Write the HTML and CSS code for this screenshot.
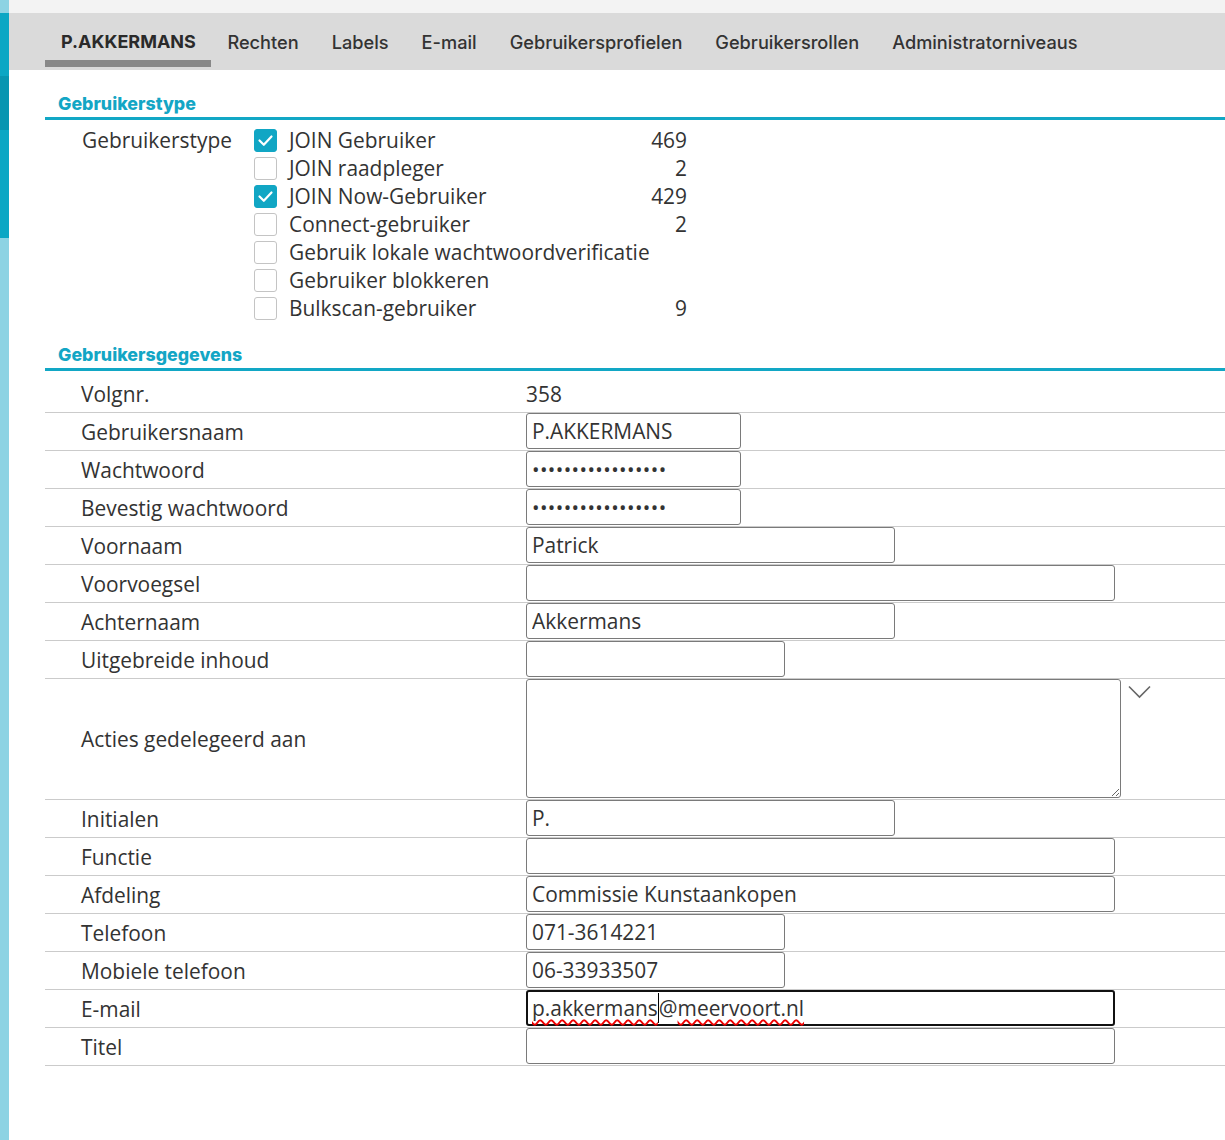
FILE: index.html
```html
<!DOCTYPE html>
<html lang="nl">
<head>
<meta charset="utf-8">
<title>Gebruiker P.AKKERMANS</title>
<link rel="stylesheet" href="styles.css">
</head>
<body>
<div class="rail">
  <div class="rail-a"></div>
  <div class="rail-b"></div>
  <div class="rail-c"></div>
  <div class="rail-b rail-d"></div>
  <div class="rail-a rail-rest"></div>
</div>
<div class="main">
  <div class="topbar"></div>
  <nav class="tabs">
    <div class="tab active">P.AKKERMANS</div>
    <div class="tab">Rechten</div>
    <div class="tab">Labels</div>
    <div class="tab">E-mail</div>
    <div class="tab">Gebruikersprofielen</div>
    <div class="tab">Gebruikersrollen</div>
    <div class="tab">Administratorniveaus</div>
  </nav>

  <div class="content">
    <h2 class="section">Gebruikerstype</h2>
    <div class="types">
      <div class="types-label">Gebruikerstype</div>
      <div class="types-list">
        <div class="opt"><span class="cb on"><svg viewBox="0 0 23 23" width="23" height="23"><path d="M5.5 11.5 L9.8 15.8 L17.5 7.5" fill="none" stroke="#fff" stroke-width="2.2" stroke-linecap="round" stroke-linejoin="round"/></svg></span><span class="opt-text">JOIN Gebruiker</span><span class="num">469</span></div>
        <div class="opt"><span class="cb"></span><span class="opt-text">JOIN raadpleger</span><span class="num">2</span></div>
        <div class="opt"><span class="cb on"><svg viewBox="0 0 23 23" width="23" height="23"><path d="M5.5 11.5 L9.8 15.8 L17.5 7.5" fill="none" stroke="#fff" stroke-width="2.2" stroke-linecap="round" stroke-linejoin="round"/></svg></span><span class="opt-text">JOIN Now-Gebruiker</span><span class="num">429</span></div>
        <div class="opt"><span class="cb"></span><span class="opt-text">Connect-gebruiker</span><span class="num">2</span></div>
        <div class="opt"><span class="cb"></span><span class="opt-text">Gebruik lokale wachtwoordverificatie</span><span class="num"></span></div>
        <div class="opt"><span class="cb"></span><span class="opt-text">Gebruiker blokkeren</span><span class="num"></span></div>
        <div class="opt"><span class="cb"></span><span class="opt-text">Bulkscan-gebruiker</span><span class="num">9</span></div>
      </div>
    </div>

    <h2 class="section section-2">Gebruikersgegevens</h2>
    <div class="table">
      <div class="row first"><div class="lbl">Volgnr.</div><div class="val plain">358</div></div>
      <div class="row"><div class="lbl">Gebruikersnaam</div><div class="val"><input class="inp w215" type="text" value="P.AKKERMANS"></div></div>
      <div class="row"><div class="lbl">Wachtwoord</div><div class="val"><input class="inp w215" type="password" value="abcdefghijklmnopq"></div></div>
      <div class="row"><div class="lbl">Bevestig wachtwoord</div><div class="val"><input class="inp w215" type="password" value="abcdefghijklmnopq"></div></div>
      <div class="row"><div class="lbl">Voornaam</div><div class="val"><input class="inp w369" type="text" value="Patrick"></div></div>
      <div class="row"><div class="lbl">Voorvoegsel</div><div class="val"><input class="inp w589" type="text" value=""></div></div>
      <div class="row"><div class="lbl">Achternaam</div><div class="val"><input class="inp w369" type="text" value="Akkermans"></div></div>
      <div class="row"><div class="lbl">Uitgebreide inhoud</div><div class="val"><input class="inp w259" type="text" value=""></div></div>
      <div class="row tall"><div class="lbl">Acties gedelegeerd aan</div><div class="val val-flex"><textarea class="area"></textarea><svg class="chev" viewBox="0 0 24 14" width="24" height="14"><polyline points="1,1.5 11.5,12 22,1.5" fill="none" stroke="#666" stroke-width="1.6"/></svg></div></div>
      <div class="row"><div class="lbl">Initialen</div><div class="val"><input class="inp w369" type="text" value="P."></div></div>
      <div class="row"><div class="lbl">Functie</div><div class="val"><input class="inp w589" type="text" value=""></div></div>
      <div class="row"><div class="lbl">Afdeling</div><div class="val"><input class="inp w589" type="text" value="Commissie Kunstaankopen"></div></div>
      <div class="row"><div class="lbl">Telefoon</div><div class="val"><input class="inp w259" type="text" value="071-3614221"></div></div>
      <div class="row"><div class="lbl">Mobiele telefoon</div><div class="val"><input class="inp w259" type="text" value="06-33933507"></div></div>
      <div class="row"><div class="lbl">E-mail</div><div class="val"><div class="inp w589 focus" role="textbox"><span class="typo">p.akkermans</span><span class="caret"></span>@<span class="typo">meervoort.nl</span></div></div></div>
      <div class="row"><div class="lbl">Titel</div><div class="val"><input class="inp w589" type="text" value=""></div></div>
    </div>
  </div>
</div>
</body>
</html>
```

FILE: styles.css
```css
html, body {
  margin: 0;
  padding: 0;
  background: #fff;
}
body {
  display: flex;
  min-height: 1140px;
  font-family: "Open Sans", "Liberation Sans", sans-serif;
  color: #333;
}

/* left rail */
.rail {
  width: 9px;
  flex: 0 0 9px;
  display: flex;
  flex-direction: column;
}
.rail-a { height: 13px; background: #8dd3e3; }
.rail-b { height: 63px; background: #0ba7c4; }
.rail-c { height: 54px; background: #0896b1; }
.rail-d { height: 108px; }
.rail-rest { flex: 1; height: auto; }

.main {
  flex: 1;
  min-width: 0;
}
.topbar {
  height: 13px;
  background: #f3f3f3;
}

/* tabs */
.tabs {
  height: 57px;
  background: #dadada;
  display: flex;
  align-items: flex-start;
  padding-left: 36px;
  box-sizing: border-box;
}
.tab {
  font-family: "Inter", "Liberation Sans", sans-serif;
  font-size: 18.2px;
  font-weight: 500;
  line-height: 20px;
  color: #333;
  padding: 19px 16.5px 8px;
  border-bottom: 7px solid transparent;
  white-space: nowrap;
}
.tab.active {
  font-weight: 700;
  font-size: 18px;
  color: #2a2a2a;
  padding-left: 16px;
  padding-right: 15px;
  border-bottom-color: #888;
}

/* content */
.content {
  padding-left: 36px;
}
.section {
  margin: 24px 0 0;
  padding: 0 0 3px 13px;
  font-family: "Inter", "Liberation Sans", sans-serif;
  font-size: 17.8px;
  font-weight: 800;
  line-height: 20px;
  color: #13a6c5;
  border-bottom: 3px solid #12a7c5;
}
.section-2 {
  margin-top: 23px;
}

/* user types */
.types {
  display: flex;
  padding-top: 6px;
}
.types-label {
  width: 172px;
  padding-left: 37px;
  font-size: 20.9px;
  line-height: 28px;
}
.types-list {
  width: 433px;
}
.opt {
  display: flex;
  align-items: center;
  height: 28px;
  font-size: 20.9px;
}
.cb {
  width: 23px;
  height: 23px;
  box-sizing: border-box;
  border: 1px solid #c4c4c4;
  border-radius: 3px;
  background: #fff;
  margin-right: 12px;
  flex: 0 0 auto;
  display: flex;
}
.cb.on {
  background: #11a6c4;
  border-color: #11a6c4;
}
.cb svg {
  margin: -1px;
}
.opt-text {
  flex: 1;
  white-space: nowrap;
}
.num {
  text-align: right;
}

/* details table */
.row {
  display: grid;
  grid-template-columns: 481px 1fr;
  min-height: 37px;
  border-bottom: 1px solid #cbcbcb;
  align-items: center;
}
.row.first {
  min-height: 36px;
  padding-top: 5px;
}
.row.tall {
  min-height: 120px;
}
.lbl {
  padding-left: 36px;
  font-size: 20.9px;
  line-height: 28px;
  white-space: nowrap;
}
.val {
  align-self: start;
  display: flex;
}
.val.plain {
  align-self: center;
  font-size: 20.9px;
  line-height: 28px;
}
.inp {
  box-sizing: border-box;
  height: 36px;
  margin: 0;
  padding: 0 5px;
  border: 1px solid #7a7a7a;
  border-radius: 3px;
  font-family: "Open Sans", "Liberation Sans", sans-serif;
  font-size: 20.9px;
  color: #333;
  background: #fff;
  outline: none;
}
input.inp[type="password"] {
  font-size: 20px;
  letter-spacing: 0.4px;
  color: #333;
}
.w215 { width: 215px; }
.w259 { width: 259px; }
.w369 { width: 369px; }
.w589 { width: 589px; }

.area {
  box-sizing: border-box;
  width: 595px;
  height: 119px;
  margin: 0;
  border: 1px solid #7a7a7a;
  border-radius: 3px;
  font-family: "Open Sans", "Liberation Sans", sans-serif;
  font-size: 20px;
  padding: 4px;
}
.chev {
  margin: 6px 0 0 7px;
}

.inp.focus {
  border: 2px solid #111;
  padding: 0 4px;
  display: flex;
  align-items: center;
  line-height: 28px;
  white-space: nowrap;
}
.typo {
  text-decoration: underline wavy #e00;
  text-decoration-skip-ink: none;
  text-decoration-thickness: 1.5px;
  text-underline-offset: 3px;
}
.caret {
  display: inline-block;
  width: 1px;
  height: 30px;
  background: #000;
}
```
